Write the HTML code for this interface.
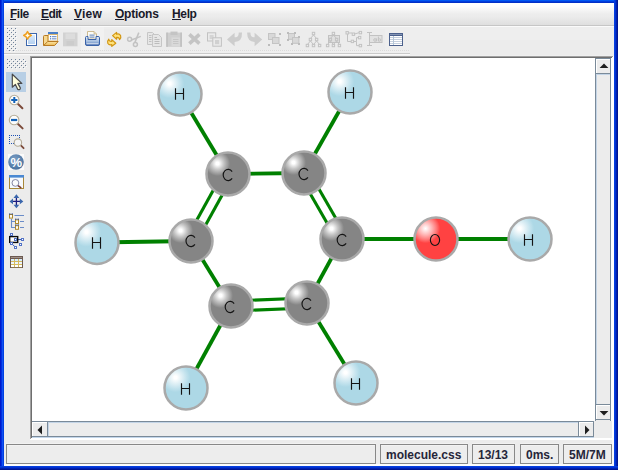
<!DOCTYPE html>
<html>
<head>
<meta charset="utf-8">
<style>
html,body{margin:0;padding:0;}
body{width:618px;height:470px;overflow:hidden;background:#ececec;font-family:"Liberation Sans",sans-serif;position:relative;}
.a{position:absolute;}
.mi{position:absolute;top:7px;font-size:12px;font-weight:bold;color:#1a1a2a;line-height:14px;white-space:nowrap;}
.mi i{position:absolute;left:0;top:12px;height:1px;background:#1a1a2a;}
.st{position:absolute;top:444px;height:20px;border:1px solid #888888;box-sizing:border-box;font-size:12px;font-weight:bold;color:#26263a;line-height:20px;padding-left:5px;white-space:nowrap;box-shadow:inset 0 1px 0 #f3f3f3,0 -1px 0 #f2f2f2;background:#ededed;}
.dots{position:absolute;background-image:radial-gradient(circle at 0.5px 0.5px,#6f8092 0.55px,rgba(111,128,146,0) 0.9px),radial-gradient(circle at 2.5px 2.5px,#6f8092 0.55px,rgba(111,128,146,0) 0.9px);background-size:4px 4px;}
</style>
</head>
<body>
<!-- menubar -->
<div class="a" style="left:4px;top:3px;width:610px;height:22px;background:linear-gradient(#ffffff 0,#fefefe 3px,#ededed 11px,#ebebeb 14px,#dfdfdf 22px)"></div>
<div class="a" style="left:4px;top:25px;width:610px;height:1px;background:#c6c6c6"></div>
<div class="a" style="left:4px;top:26px;width:610px;height:1px;background:#fafafa"></div>
<div class="a" style="left:4px;top:27px;width:610px;height:26px;background:#eeeeee"></div>
<div class="a" style="left:410px;top:40px;width:204px;height:15px;background:#ececec"></div>
<div class="a" style="left:20px;top:29px;width:389px;height:21px;background:#ececec"></div>
<div class="a" style="left:4px;top:53px;width:406px;height:1px;background:#c9c9c9"></div>
<div class="a" style="left:4px;top:54px;width:406px;height:1px;background:#f8f8f8"></div>
<div class="a" style="left:4px;top:55px;width:610px;height:1px;background:#efefef"></div>
<span class="mi" style="left:10px;letter-spacing:-0.5px"><i style="width:6px"></i>File</span>
<span class="mi" style="left:41px;letter-spacing:-0.6px"><i style="width:8px"></i>Edit</span>
<span class="mi" style="left:74px;letter-spacing:0.2px"><i style="width:8px"></i>View</span>
<span class="mi" style="left:115px;letter-spacing:-0.25px"><i style="width:9px"></i>Options</span>
<span class="mi" style="left:172px;letter-spacing:-0.35px"><i style="width:9px"></i>Help</span>
<!-- toolbar handles -->
<!-- selected tool bg -->
<div class="a" style="left:6px;top:72px;width:20px;height:20px;background:#b8cfe5"></div>
<!-- scrollpane -->
<div class="a" style="left:30px;top:56px;width:584px;height:384px;background:#fff"></div>
<div class="a" style="left:30px;top:56px;width:583px;height:1px;background:#a0a0a0"></div>
<div class="a" style="left:30px;top:56px;width:1px;height:383px;background:#a0a0a0"></div>
<div class="a" style="left:31px;top:57px;width:581px;height:1px;background:#6e6e6e"></div>
<div class="a" style="left:31px;top:57px;width:1px;height:381px;background:#6e6e6e"></div>
<!-- vertical scrollbar -->
<div class="a" style="left:595px;top:58px;width:17px;height:363px;background:#ececec"></div>
<div class="a" style="left:595px;top:58px;width:1px;height:363px;background:#7a8a99"></div>
<div class="a" style="left:610px;top:58px;width:1px;height:363px;background:#7a8a99"></div>
<div class="a" style="left:596px;top:58px;width:14px;height:1px;background:#7a8a99"></div>
<div class="a" style="left:596px;top:59px;width:14px;height:1px;background:#fff"></div>
<div class="a" style="left:596px;top:59px;width:1px;height:14px;background:#fff"></div>
<div class="a" style="left:596px;top:73px;width:14px;height:1px;background:#7a8a99"></div>
<div class="a" style="left:596px;top:74px;width:14px;height:1px;background:#c3d4e6"></div>
<div class="a" style="left:596px;top:75px;width:1px;height:329px;background:#c3d4e6"></div>
<div class="a" style="left:596px;top:404px;width:14px;height:1px;background:#7a8a99"></div>
<div class="a" style="left:596px;top:405px;width:14px;height:1px;background:#fff"></div>
<div class="a" style="left:596px;top:405px;width:1px;height:14px;background:#fff"></div>
<div class="a" style="left:596px;top:419px;width:14px;height:1px;background:#7a8a99"></div>
<div class="a" style="left:611px;top:58px;width:1px;height:363px;background:#ffffff"></div>
<!-- horizontal scrollbar -->
<div class="a" style="left:32px;top:421px;width:563px;height:17px;background:#ececec"></div>
<div class="a" style="left:32px;top:421px;width:562px;height:1px;background:#7a8a99"></div>
<div class="a" style="left:32px;top:436px;width:562px;height:1px;background:#7a8a99"></div>
<div class="a" style="left:32px;top:437px;width:562px;height:1px;background:#c3d6ea"></div>
<div class="a" style="left:32px;top:422px;width:15px;height:1px;background:#fff"></div>
<div class="a" style="left:32px;top:422px;width:1px;height:14px;background:#fff"></div>
<div class="a" style="left:47px;top:422px;width:1px;height:14px;background:#7a8a99"></div>
<div class="a" style="left:48px;top:422px;width:1px;height:14px;background:#c3d4e6"></div>
<div class="a" style="left:49px;top:422px;width:529px;height:1px;background:#c3d4e6"></div>
<div class="a" style="left:578px;top:422px;width:1px;height:14px;background:#7a8a99"></div>
<div class="a" style="left:579px;top:422px;width:14px;height:1px;background:#fff"></div>
<div class="a" style="left:579px;top:422px;width:1px;height:14px;background:#fff"></div>
<div class="a" style="left:593px;top:422px;width:1px;height:14px;background:#7a8a99"></div>
<div class="a" style="left:594px;top:421px;width:1px;height:17px;background:#ececec"></div>
<!-- corner -->
<div class="a" style="left:595px;top:421px;width:17px;height:17px;background:#ececec"></div>
<svg class="a" style="left:0;top:0" width="618" height="470" id="arrows">
<g fill="#1e1e1e">
<path d="M604 63.5L608.4 68H599.6Z"/>
<path d="M604 415.5L608.4 411H599.6Z"/>
<path d="M37.5 430L42 425.6V434.4Z"/>
<path d="M589.5 430L585 425.6V434.4Z"/>
</g>
</svg>
<svg class="a" style="left:0;top:0" width="618" height="470" viewBox="0 0 618 470" id="mol">
<defs><radialGradient id="gH" cx="0.256" cy="0.256" r="0.34"><stop offset="0" stop-color="#ffffff"/><stop offset="0.1" stop-color="#ffffff"/><stop offset="0.45" stop-color="#deeff5"/><stop offset="0.75" stop-color="#c2e2ed"/><stop offset="1" stop-color="#add8e6"/></radialGradient><radialGradient id="gC" cx="0.256" cy="0.256" r="0.29"><stop offset="0" stop-color="#ffffff"/><stop offset="0.12" stop-color="#ffffff"/><stop offset="0.5" stop-color="#c6c6c6"/><stop offset="1" stop-color="#858585"/></radialGradient><radialGradient id="gO" cx="0.256" cy="0.256" r="0.34"><stop offset="0" stop-color="#ffffff"/><stop offset="0.1" stop-color="#fff0f0"/><stop offset="0.45" stop-color="#ffb4b4"/><stop offset="0.75" stop-color="#ff7a7a"/><stop offset="1" stop-color="#ff4242"/></radialGradient></defs>
<g stroke="#008000" stroke-width="3.8" fill="none">
<line x1="180" y1="94" x2="228" y2="174"/>
<line x1="350" y1="92" x2="304" y2="173"/>
<line x1="228" y1="174" x2="304" y2="173"/>
<line x1="97" y1="242.5" x2="191" y2="241"/>
<line x1="191" y1="241" x2="231" y2="306"/>
<line x1="342" y1="239" x2="307" y2="303"/>
<line x1="342" y1="239" x2="436" y2="239"/>
<line x1="436" y1="239" x2="530" y2="239"/>
<line x1="231" y1="306" x2="186" y2="388"/>
<line x1="307" y1="303" x2="356" y2="383"/>
<line stroke-width="3.1" x1="223.6" y1="171.6" x2="186.6" y2="238.6"/>
<line stroke-width="3.1" x1="232.4" y1="176.4" x2="195.4" y2="243.4"/>
<line stroke-width="3.1" x1="299.7" y1="175.5" x2="337.7" y2="241.5"/>
<line stroke-width="3.1" x1="308.3" y1="170.5" x2="346.3" y2="236.5"/>
<line stroke-width="3.1" x1="231.2" y1="311.0" x2="307.2" y2="308.0"/>
<line stroke-width="3.1" x1="230.8" y1="301.0" x2="306.8" y2="298.0"/>
</g>
<circle cx="180" cy="94" r="21.5" fill="url(#gH)" stroke="#a9a9a9" stroke-width="2.5"/>
<circle cx="350" cy="92" r="21.5" fill="url(#gH)" stroke="#a9a9a9" stroke-width="2.5"/>
<circle cx="228" cy="174" r="21.5" fill="url(#gC)" stroke="#a9a9a9" stroke-width="2.5"/>
<circle cx="304" cy="173" r="21.5" fill="url(#gC)" stroke="#a9a9a9" stroke-width="2.5"/>
<circle cx="97" cy="242.5" r="21.5" fill="url(#gH)" stroke="#a9a9a9" stroke-width="2.5"/>
<circle cx="191" cy="241" r="21.5" fill="url(#gC)" stroke="#a9a9a9" stroke-width="2.5"/>
<circle cx="342" cy="239" r="21.5" fill="url(#gC)" stroke="#a9a9a9" stroke-width="2.5"/>
<circle cx="436" cy="239" r="21.5" fill="url(#gO)" stroke="#a9a9a9" stroke-width="2.5"/>
<circle cx="530" cy="239" r="21.5" fill="url(#gH)" stroke="#a9a9a9" stroke-width="2.5"/>
<circle cx="231" cy="306" r="21.5" fill="url(#gC)" stroke="#a9a9a9" stroke-width="2.5"/>
<circle cx="307" cy="303" r="21.5" fill="url(#gC)" stroke="#a9a9a9" stroke-width="2.5"/>
<circle cx="186" cy="388" r="21.5" fill="url(#gH)" stroke="#a9a9a9" stroke-width="2.5"/>
<circle cx="356" cy="383" r="21.5" fill="url(#gH)" stroke="#a9a9a9" stroke-width="2.5"/>
<g fill="none" stroke="#141414" stroke-width="1.15">
<path d="M175.5 88.2V99.8M183.5 88.2V99.8M175.5 93.5H183.5"/>
<path d="M345.5 87.2V98.8M353.5 87.2V98.8M345.5 92.5H353.5"/>
<path d="M232.14 171.55A5.0 5.6 0 1 0 232.14 178.45"/>
<path d="M307.94 170.55A5.0 5.6 0 1 0 307.94 177.45"/>
<path d="M92.5 237.2V248.8M100.5 237.2V248.8M92.5 242.5H100.5"/>
<path d="M194.94 237.55A5.0 5.6 0 1 0 194.94 244.45"/>
<path d="M346.14 236.55A5.0 5.6 0 1 0 346.14 243.45"/>
<ellipse cx="435" cy="240" rx="4.6" ry="5.5"/>
<path d="M524.5 234.2V245.8M532.5 234.2V245.8M524.5 239.5H532.5"/>
<path d="M234.14 303.55A5.0 5.6 0 1 0 234.14 310.45"/>
<path d="M310.94 300.55A5.0 5.6 0 1 0 310.94 307.45"/>
<path d="M181.5 383.2V394.8M189.5 383.2V394.8M181.5 388.5H189.5"/>
<path d="M351.5 378.2V389.8M359.5 378.2V389.8M351.5 383.5H359.5"/>
</g>
</svg>
<svg class="a" style="left:0;top:0" width="618" height="470" viewBox="0 0 618 470" id="icons">
<defs>
<pattern id="bump" x="7" y="28" width="4" height="4" patternUnits="userSpaceOnUse"><rect x="0" y="0" width="1" height="1" fill="#71839a"/><rect x="2" y="2" width="1" height="1" fill="#71839a"/><rect x="1" y="1" width="1" height="1" fill="#fafafa"/><rect x="3" y="3" width="1" height="1" fill="#fafafa"/></pattern>
<pattern id="bump2" x="7" y="59" width="4" height="4" patternUnits="userSpaceOnUse"><rect x="0" y="0" width="1" height="1" fill="#71839a"/><rect x="2" y="2" width="1" height="1" fill="#71839a"/><rect x="1" y="1" width="1" height="1" fill="#fafafa"/><rect x="3" y="3" width="1" height="1" fill="#fafafa"/></pattern>
<linearGradient id="docg" x1="0" y1="0" x2="0" y2="1"><stop offset="0" stop-color="#dcebfa"/><stop offset="1" stop-color="#b4d0f0"/></linearGradient>
<linearGradient id="fold" x1="0" y1="0" x2="0" y2="1"><stop offset="0" stop-color="#fbe6a8"/><stop offset="1" stop-color="#ecb850"/></linearGradient>
<linearGradient id="prn" x1="0" y1="0" x2="0" y2="1"><stop offset="0" stop-color="#e8f0fa"/><stop offset="0.6" stop-color="#9db8dc"/><stop offset="1" stop-color="#3f68ae"/></linearGradient>
<radialGradient id="pct" cx="0.4" cy="0.35" r="0.7"><stop offset="0" stop-color="#7da0c6"/><stop offset="1" stop-color="#456e9c"/></radialGradient>
</defs>
<rect x="7" y="28" width="10" height="24" fill="url(#bump)"/>
<rect x="7" y="59" width="20" height="10" fill="url(#bump2)"/>
<!-- toolbar dotted bottom line -->
<line x1="6" y1="50.5" x2="409" y2="50.5" stroke="#dadada" stroke-width="1" stroke-dasharray="1 1"/>
<!-- NEW -->
<g>
<rect x="26.5" y="33.5" width="10" height="12" fill="#fff" stroke="#3c66ac"/>
<rect x="28" y="35" width="7" height="9" fill="url(#docg)"/>
<path d="M27.5 31.6 L28.9 34 L31.3 35.4 L28.9 36.8 L27.5 39.2 L26.1 36.8 L23.7 35.4 L26.1 34Z" fill="#fffbe8" stroke="#f0a020" stroke-width="1.5" stroke-linejoin="round"/>
</g>
<!-- OPEN -->
<g>
<path d="M43.5 45.5V36.5Q43.5 35.5 44.5 35.5H48V41.5" fill="#f6d890" stroke="#b87a22"/>
<rect x="48" y="32" width="10" height="9.5" fill="#fff"/>
<rect x="48" y="32" width="10" height="2.4" fill="#4a7fc8"/>
<rect x="48.5" y="34.5" width="9" height="6.5" fill="#fdfdfd" stroke="#d8a850" stroke-width="0.8"/>
<rect x="50" y="36" width="1.2" height="1.2" fill="#4a78c0"/><rect x="52" y="36" width="4.5" height="1.2" fill="#7a9ad0"/>
<rect x="50" y="38.2" width="1.2" height="1.2" fill="#4a78c0"/><rect x="52" y="38.2" width="4.5" height="1.2" fill="#7a9ad0"/>
<path d="M43.6 45.5L47.8 41.5H58.2L54.6 45.5Z" fill="url(#fold)" stroke="#b87a22" stroke-linejoin="round"/>
</g>
<!-- SAVE disabled -->
<g>
<rect x="63" y="32.5" width="14.5" height="13.8" fill="#d2d2d2"/>
<rect x="65.5" y="33.5" width="9.5" height="5.5" fill="#dcdcdc"/>
<rect x="66.5" y="41" width="7.5" height="4.5" fill="#cccccc"/>
</g>
<!-- PRINT -->
<g>
<rect x="81" y="27" width="23" height="23" fill="#f1f1f1"/>
<path d="M87.5 39V31.5H94L96.5 34V39Z" fill="#fbfbf6" stroke="#c8b488" stroke-width="0.9"/>
<path d="M94 31.5V34H96.5" fill="#e8dcc0" stroke="#c8b488" stroke-width="0.7"/>
<rect x="89.5" y="34.6" width="5" height="1" fill="#5a7fb8"/><rect x="89.5" y="36.6" width="5" height="1" fill="#5a7fb8"/>
<path d="M85.5 37.5Q85.5 36.5 86.5 36.5H88V39.5H96V36.5H98Q99.5 36.5 99.5 37.5V44Q99.5 45.5 98 45.5H87Q85.5 45.5 85.5 44Z" fill="url(#prn)" stroke="#3a62a8" stroke-width="1"/>
<rect x="86.5" y="43.2" width="12" height="1" fill="#f0f4fa" opacity="0.8"/>
</g>
<!-- REFRESH -->
<g fill="#ffe27a" stroke="#d29612" stroke-width="1.2" stroke-linejoin="round">
<path d="M112.6 35.6L116.6 32.4V34.2Q119.2 33.2 120.6 35.6Q121.4 37.6 119.6 39.6Q119.4 37.2 116.6 37.4V39.2Z"/>
<path d="M115.8 43.2L111.8 46.4V44.6Q109.2 45.6 107.8 43.2Q107 41.2 108.8 39.2Q109 41.6 111.8 41.4V39.6Z"/>
</g>
<!-- CUT disabled -->
<g fill="none" stroke="#c2c2c2" stroke-width="1.5">
<circle cx="129.6" cy="39.2" r="2"/>
<circle cx="135.4" cy="44.6" r="2"/>
<path d="M131.4 40L140.8 36.4"/>
<path d="M134.8 42.6L138.8 32.6"/>
</g>
<!-- COPY disabled -->
<g fill="#e6e6e6" stroke="#c6c6c6" stroke-width="1">
<path d="M147.5 32.5H152.5L155 35V44.5H147.5Z"/>
<path d="M149 35.5H151.5M149 37.5H151.5M149 39.5H151.5M149 41.5H151.5" stroke="#c0c0c0" fill="none"/>
<path d="M152.5 34.5H158.5L161.5 37.5V46.5H152.5Z"/>
<path d="M154.5 37.5H157M154.5 39.5H159.5M154.5 41.5H159.5M154.5 43.5H159.5" stroke="#bcbcbc" fill="none"/>
</g>
<!-- PASTE disabled -->
<g>
<rect x="166.2" y="32.6" width="15.8" height="14.2" fill="#cfcfcf"/>
<rect x="166.2" y="32.6" width="1.8" height="14.2" fill="#c2c2c2"/><rect x="180.2" y="32.6" width="1.8" height="14.2" fill="#c2c2c2"/>
<rect x="170.5" y="31.6" width="7" height="3.4" fill="#c4c4c4"/>
<rect x="171.5" y="37.5" width="8.5" height="8.6" fill="#d9d9d9"/>
<path d="M173 39.5H178.5M173 41.5H178.5M173 43.5H178.5" stroke="#c6c6c6"/>
</g>
<!-- DELETE disabled -->
<g stroke="#c4c4c4" stroke-width="3.6" fill="none">
<path d="M189.4 34.4L199.4 43.6M199.4 34.4L189.4 43.6"/>
</g>
<!-- DUPLICATE disabled -->
<g fill="#eaeaea" stroke="#c2c2c2" stroke-width="1">
<rect x="207.5" y="32.8" width="8.2" height="8.2"/>
<rect x="209.6" y="35" width="4" height="4" fill="#d4d4d4" stroke="none"/>
<rect x="212.8" y="37.8" width="8.6" height="8.4"/>
<rect x="215" y="40" width="4.2" height="4.2" fill="#d0d0d0" stroke="none"/>
</g>
<!-- UNDO / REDO disabled -->
<g fill="#cdcdcd">
<path d="M227 39.5L234.6 32.8V37.2Q238.6 37.8 238.8 32.4H242Q242.4 41.6 234.6 42V46.2Z"/>
<path d="M262.2 39.5L254.6 32.8V37.2Q250.6 37.8 250.4 32.4H247.2Q246.8 41.6 254.6 42V46.2Z"/>
</g>
<!-- GROUP disabled -->
<g fill="#d8d8d8" stroke="#c4c4c4" stroke-width="1">
<rect x="268.5" y="33.5" width="6.5" height="6"/>
<rect x="272.5" y="37.5" width="6.5" height="6"/>
</g>
<g fill="#bcbcbc"><rect x="279" y="33" width="2" height="2"/><rect x="268" y="44" width="2" height="2"/><rect x="279" y="44" width="2" height="2"/></g>
<!-- UNGROUP disabled -->
<g fill="#d8d8d8" stroke="#c4c4c4" stroke-width="1">
<rect x="288.5" y="33.5" width="6" height="5.8"/>
<rect x="292.5" y="37.5" width="6.4" height="5.8"/>
</g>
<g fill="#bcbcbc"><rect x="287" y="32" width="2" height="2"/><rect x="294" y="32" width="2" height="2"/><rect x="287" y="39" width="2" height="2"/><rect x="298" y="36" width="2" height="2"/><rect x="291" y="43" width="2" height="2"/><rect x="298" y="43" width="2" height="2"/></g>
<!-- TREE disabled -->
<g fill="none" stroke="#c2c2c2" stroke-width="1">
<path d="M313.5 35L310.4 38.5M313.5 35L316.6 38.5M310.4 41L307.4 44.5M310.4 41L313.5 44.5M316.6 41L313.5 44.5M316.6 41L319.6 44.5"/>
<rect x="312.3" y="32.3" width="2.4" height="2.4"/><rect x="309.2" y="38.3" width="2.4" height="2.4"/><rect x="315.4" y="38.3" width="2.4" height="2.4"/>
<rect x="306.2" y="44.3" width="2.4" height="2.4"/><rect x="312.3" y="44.3" width="2.4" height="2.4"/><rect x="318.4" y="44.3" width="2.4" height="2.4"/>
</g>
<!-- TREE2 disabled -->
<g fill="none" stroke="#c2c2c2" stroke-width="1">
<rect x="328.5" y="35.5" width="11" height="7" fill="#e0e0e0"/>
<path d="M333.4 35L330.4 38.5M333.4 35L336.6 38.5M330.4 41L327.6 44.5M330.4 41L333.4 44.5M336.6 41L333.4 44.5M336.6 41L339.4 44.5"/>
<rect x="332.2" y="32.3" width="2.4" height="2.4"/><rect x="329.2" y="38.3" width="2.4" height="2.4"/><rect x="335.4" y="38.3" width="2.4" height="2.4"/>
<rect x="326.4" y="44.3" width="2.4" height="2.4"/><rect x="332.2" y="44.3" width="2.4" height="2.4"/><rect x="338.2" y="44.3" width="2.4" height="2.4"/>
</g>
<!-- ORG disabled -->
<g fill="none" stroke="#c2c2c2" stroke-width="1">
<path d="M347.5 34V41.5H351M348.5 33H352M354.5 34L359 32.7M353.5 41.5H356.5V37.6H358.5M356.5 41.5V45.6H359"/>
<rect x="346" y="31.6" width="2.4" height="2.4"/><rect x="352.2" y="33" width="2.4" height="2.4"/><rect x="359.2" y="31.4" width="2.4" height="2.4"/>
<rect x="358.4" y="36.4" width="2.4" height="2.4"/><rect x="351.2" y="40.2" width="2.4" height="2.4"/><rect x="359.2" y="44.4" width="2.4" height="2.4"/>
</g>
<!-- TEXTFIELD disabled -->
<g fill="none" stroke="#c2c2c2" stroke-width="1">
<path d="M369.5 32.5V45.5M367 32.5H372M367 45.5H372"/>
<rect x="369.5" y="35.5" width="12.5" height="7" fill="#e2e2e2"/>
<circle cx="375" cy="40" r="1.3"/><path d="M376.6 38.4V41.4M378.4 36.6V41.4"/><circle cx="379.6" cy="40" r="1.2"/>
</g>
<!-- TABLE enabled -->
<g>
<rect x="385" y="28" width="24" height="22" fill="#eeeeee"/>
<rect x="389" y="33" width="14" height="13" fill="#4c618c"/>
<rect x="390" y="34" width="12" height="1" fill="#8394b4"/>
<rect x="390" y="36" width="12" height="9" fill="#c6d0de"/>
<rect x="393" y="36" width="1" height="9" fill="#b4c6d8"/>
<g fill="#ffffff"><rect x="390" y="36" width="3" height="1"/><rect x="394" y="36" width="8" height="1"/><rect x="390" y="38" width="3" height="1"/><rect x="394" y="38" width="8" height="1"/><rect x="390" y="40" width="3" height="1"/><rect x="394" y="40" width="8" height="1"/><rect x="390" y="42" width="3" height="1"/><rect x="394" y="42" width="8" height="1"/><rect x="390" y="44" width="3" height="1"/><rect x="394" y="44" width="8" height="1"/></g>
</g>
<!-- LEFT: SELECT -->
<path d="M12.3 74.2V87.2L15.4 84.4L17.8 89.4Q19 90 20 89.2Q20.6 88.4 20.2 87.6L17.8 83.4H21.8Z" fill="#ffffdc" stroke="#4a4a4a" stroke-width="1.2" stroke-linejoin="round"/>
<!-- ZOOM IN -->
<g>
<path d="M18 104L22.4 108.2" stroke="#7c4a3a" stroke-width="2" stroke-linecap="round"/>
<circle cx="14.3" cy="100" r="4.7" fill="#fdfdfd" stroke="#b4ac98" stroke-width="1.1"/>
<path d="M11.2 100H17.4M14.3 96.9V103.1" stroke="#1262b8" stroke-width="2"/>
</g>
<!-- ZOOM OUT -->
<g>
<path d="M18 124L22.6 128.4" stroke="#7c4a3a" stroke-width="2" stroke-linecap="round"/>
<circle cx="14.1" cy="120" r="4.8" fill="#fdfdfd" stroke="#b4ac98" stroke-width="1.1"/>
<path d="M11 120H17.2" stroke="#1262b8" stroke-width="2.2"/>
</g>
<!-- ZOOM AREA -->
<g>
<g fill="#1c50b4"><rect x="9" y="135" width="1" height="1"/><rect x="11" y="135" width="1" height="1"/><rect x="13" y="135" width="1" height="1"/><rect x="15" y="135" width="1" height="1"/><rect x="17" y="135" width="1" height="1"/><rect x="19" y="135" width="1" height="1"/><rect x="9" y="137" width="1" height="1"/><rect x="9" y="139" width="1" height="1"/><rect x="9" y="141" width="1" height="1"/><rect x="9" y="143" width="1" height="1"/><rect x="11" y="143" width="1" height="1"/><rect x="13" y="143" width="1" height="1"/><rect x="19" y="137" width="1" height="1"/><rect x="19" y="139" width="1" height="1"/></g>
<path d="M20.6 145.2L23.6 148.2" stroke="#7c4a3a" stroke-width="1.8" stroke-linecap="round"/>
<circle cx="17.9" cy="142.6" r="3.7" fill="#f4f4f4" stroke="#b4ac98" stroke-width="1.1"/>
</g>
<!-- PERCENT -->
<g>
<rect x="8" y="154" width="16" height="16" fill="#fbfbfb"/>
<circle cx="16" cy="162" r="7.8" fill="url(#pct)"/>
<text x="16.2" y="166.6" font-size="13" font-weight="bold" text-anchor="middle" fill="#fff" font-family="Liberation Sans">%</text>
</g>
<!-- ZOOM WINDOW -->
<g>
<rect x="9.5" y="175.5" width="14" height="13" fill="#f6f9fd" stroke="#a8883a"/>
<rect x="9" y="175" width="15" height="2.6" fill="#4a88d2"/>
<path d="M18 185.6L20.8 187.6" stroke="#7c3a30" stroke-width="1.6" stroke-linecap="round"/>
<circle cx="15.4" cy="182.9" r="3.4" fill="#fbfbfd" stroke="#77779a" stroke-width="0.9"/>
</g>
<!-- MOVE -->
<g>
<path d="M16.4 197V205.8M12 201.4H20.8" stroke="#1c1c80" stroke-width="1.3"/>
<g fill="#3a66ac"><path d="M16.4 194.3L19.3 197.9H13.5Z"/><path d="M16.4 208.3L19.3 204.8H13.5Z"/><path d="M9.5 201.4L13 198.5V204.3Z"/><path d="M23.3 201.4L19.8 198.5V204.3Z"/></g>
</g>
<!-- TREE -->
<g>
<path d="M14.5 215.5H24M20 221.5H24M20 227.5H24M11.5 219V227.5H15M11.5 221.5H15" stroke="#6a8cc8" stroke-width="1.1" fill="none"/>
<g fill="#fffdf4" stroke="#b08a2c" stroke-width="1"><rect x="9.5" y="214.5" width="3" height="3.6"/><rect x="15.5" y="219.9" width="3" height="3.6"/><rect x="15.5" y="225.7" width="3" height="3.6"/></g>
<g fill="#1a3c8c"><rect x="9.2" y="213.4" width="1.2" height="1.2"/><rect x="11.6" y="213.4" width="1.2" height="1.2"/><rect x="15.2" y="218.6" width="1.2" height="1.2"/><rect x="17.6" y="218.6" width="1.2" height="1.2"/><rect x="15.2" y="224.4" width="1.2" height="1.2"/><rect x="17.6" y="224.4" width="1.2" height="1.2"/></g>
</g>
<!-- GRAPH -->
<g>
<path d="M17 239.5H21.4M12.5 244.5L14.8 246.6M11.5 236V235.5" stroke="#3a5cb0" stroke-width="1" fill="none"/>
<rect x="9.7" y="236.6" width="8" height="5.8" fill="#fff" stroke="#0a0a0a" stroke-width="1.4"/>
<g fill="#fff" stroke="#5272c6" stroke-width="1"><rect x="10.5" y="233.5" width="2" height="2"/><rect x="14.5" y="238.5" width="2" height="2"/><rect x="21.5" y="238.5" width="2" height="2"/><rect x="10.5" y="242.5" width="2" height="2"/><rect x="19.5" y="243.5" width="2" height="2"/><rect x="14.5" y="246.5" width="2" height="2"/></g>
</g>
<!-- TABLE (left) -->
<g>
<rect x="10" y="256" width="13" height="12" fill="#6c5a52"/>
<rect x="11" y="257" width="11" height="1" fill="#a39389"/>
<rect x="11" y="259" width="11" height="8" fill="#d6ba5c"/>
<rect x="11" y="267" width="11" height="1" fill="#8a744e"/>
<rect x="11" y="259" width="3" height="2" fill="#d8ecfc"/><rect x="15" y="259" width="3" height="2" fill="#d8ecfc"/><rect x="19" y="259" width="3" height="2" fill="#d8ecfc"/><rect x="11" y="262" width="3" height="2" fill="#ecf5fd"/><rect x="15" y="262" width="3" height="2" fill="#ecf5fd"/><rect x="19" y="262" width="3" height="2" fill="#ecf5fd"/><rect x="11" y="265" width="3" height="2" fill="#ffffff"/><rect x="15" y="265" width="3" height="2" fill="#ffffff"/><rect x="19" y="265" width="3" height="2" fill="#ffffff"/>
</g>

</svg>
<!-- status bar -->
<div class="st" style="left:6px;width:370px"></div>
<div class="st" style="left:380px;width:88px">molecule.css</div>
<div class="st" style="left:472px;width:43px">13/13</div>
<div class="st" style="left:520px;width:39px">0ms.</div>
<div class="st" style="left:563px;width:49px">5M/7M</div>
<!-- blue frame -->
<div class="a" style="left:0;top:0;width:618px;height:3px;background:linear-gradient(#0058f2 0,#0058f2 1px,#003cdc 1px,#003cdc 2px,#002fc8 2px)"></div>
<div class="a" style="left:0;top:0;width:4px;height:470px;background:linear-gradient(90deg,#0019cc 0,#0019cc 1px,#0030e0 1px,#0030e0 2px,#1250f2 2px,#1250f2 3px,#0040e2 3px)"></div>
<div class="a" style="left:614px;top:0;width:4px;height:470px;background:linear-gradient(90deg,#0a44e6,#0034d4 35%,#001fae 65%,#000f82)"></div>
<div class="a" style="left:4px;top:464px;width:610px;height:2px;background:#fcfcfc"></div>
<div class="a" style="left:612px;top:440px;width:2px;height:26px;background:#f8f8f8"></div>
<div class="a" style="left:0;top:466px;width:618px;height:4px;background:linear-gradient(#0a44e6,#0034d4 35%,#001fae 65%,#000f82)"></div>
</body>
</html>
